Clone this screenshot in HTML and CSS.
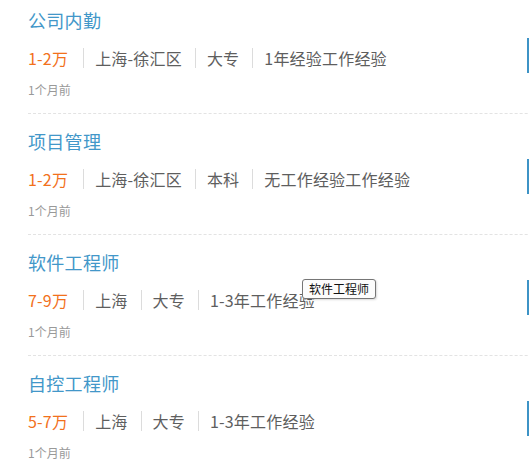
FILE: index.html
```html
<!DOCTYPE html>
<html lang="zh-CN">
<head>
<meta charset="utf-8">
<title>职位列表</title>
<link rel="stylesheet" href="styles.css">
</head>
<body>
<ul class="job-list">
  <li class="job">
    <div class="job-main">
      <a class="job-title">公司内勤</a>
      <div class="job-info">
        <span class="salary">1-2万</span>
        <span class="info">上海-徐汇区</span>
        <span class="info">大专</span>
        <span class="info">1年经验工作经验</span>
      </div>
      <div class="job-time">1个月前</div>
    </div>
    <a class="apply" aria-label="申请职位"></a>
  </li>
  <li class="job">
    <div class="job-main">
      <a class="job-title">项目管理</a>
      <div class="job-info">
        <span class="salary">1-2万</span>
        <span class="info">上海-徐汇区</span>
        <span class="info">本科</span>
        <span class="info">无工作经验工作经验</span>
      </div>
      <div class="job-time">1个月前</div>
    </div>
    <a class="apply" aria-label="申请职位"></a>
  </li>
  <li class="job">
    <div class="job-main">
      <a class="job-title">软件工程师</a>
      <div class="job-info">
        <span class="salary">7-9万</span>
        <span class="info">上海</span>
        <span class="info">大专</span>
        <span class="info">1-3年工作经验</span>
      </div>
      <div class="job-time">1个月前</div>
    </div>
    <a class="apply" aria-label="申请职位"></a>
  </li>
  <li class="job">
    <div class="job-main">
      <a class="job-title">自控工程师</a>
      <div class="job-info">
        <span class="salary">5-7万</span>
        <span class="info">上海</span>
        <span class="info">大专</span>
        <span class="info">1-3年工作经验</span>
      </div>
      <div class="job-time">1个月前</div>
    </div>
    <a class="apply" aria-label="申请职位"></a>
  </li>
</ul>
<div class="tooltip">软件工程师</div>
</body>
</html>
```

FILE: styles.css
```css
html, body {
  margin: 0;
  padding: 0;
  background: #fff;
  overflow: hidden;
}
body {
  font-family: "Noto Sans CJK SC", "Noto Sans", sans-serif;
  position: relative;
  width: 529px;
  height: 467px;
}
.job-list {
  list-style: none;
  margin: -7px 0 0 28px;
  padding: 0;
  width: 600px;
}
.job {
  display: flex;
  align-items: flex-start;
  padding: 15px 0 14px;
  border-bottom: 1px dashed #e3e3e3;
}
.job-main {
  flex: 1;
}
.job-title {
  display: block;
  font-size: 18px;
  line-height: 24px;
  color: #4297c9;
  letter-spacing: 0.3px;
}
.job-info {
  display: flex;
  align-items: center;
  margin-top: 14px;
  height: 24px;
  font-size: 16px;
  color: #5e5e5e;
  letter-spacing: 0.2px;
}
.salary {
  color: #f2711c;
  line-height: 20px;
  margin-right: 15px;
}
.info {
  line-height: 20px;
  padding-left: 11px;
  margin-right: 13px;
  border-left: 1px solid #dcdcdc;
}
.job-time {
  margin-top: 11px;
  font-size: 12px;
  line-height: 18px;
  color: #999;
}
.apply {
  box-sizing: border-box;
  width: 101px;
  height: 35px;
  margin-top: 30px;
  border: 1px solid #3d93c6;
  border-left-width: 2px;
}
.tooltip {
  position: absolute;
  left: 302px;
  top: 279px;
  box-sizing: border-box;
  height: 20px;
  padding: 0 6px;
  border: 1px solid #767676;
  border-radius: 3px;
  background: #fcfcfc;
  color: #111;
  font-size: 12px;
  line-height: 18px;
  box-shadow: 1px 1px 2px rgba(0,0,0,0.15);
}
```
